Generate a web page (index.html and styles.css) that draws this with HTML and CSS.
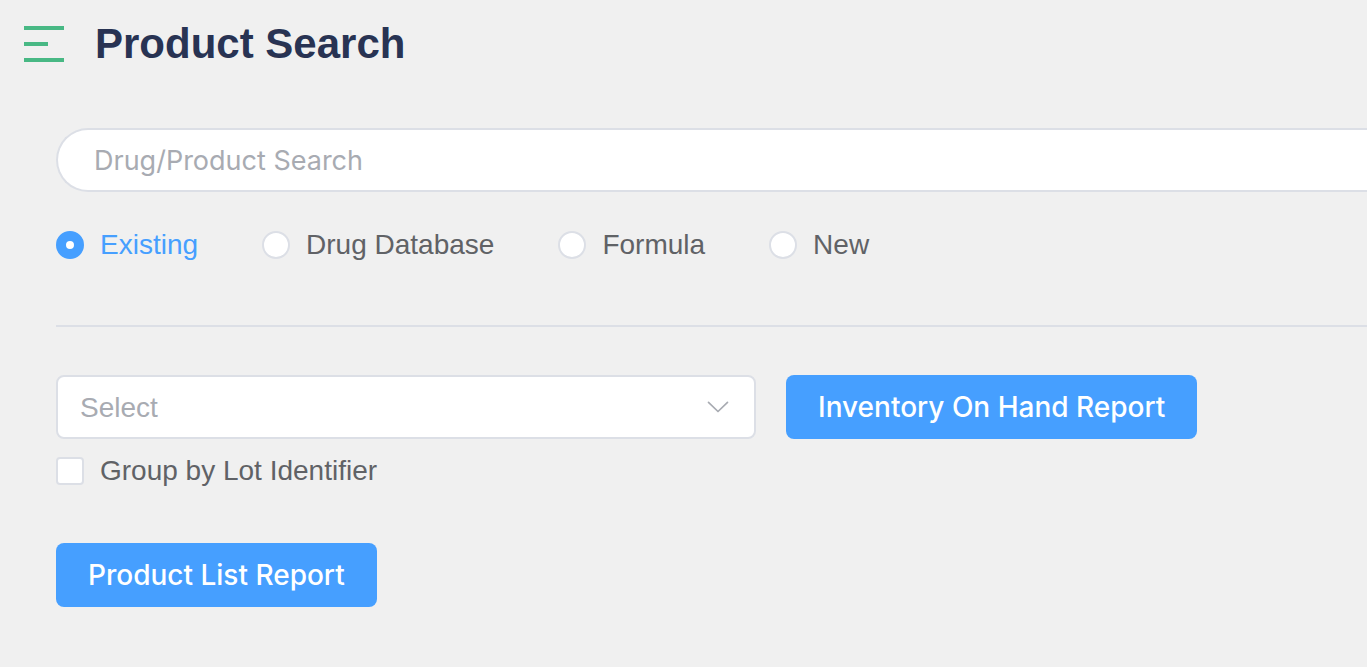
FILE: index.html
```html
<!DOCTYPE html>
<html lang="en">
<head>
<meta charset="utf-8">
<title>Product Search</title>
<link rel="stylesheet" href="styles.css">
</head>
<body>
<header class="topbar">
  <button class="menu" type="button" aria-label="Toggle menu">
    <svg width="40" height="36" viewBox="0 0 40 36" fill="#48b884" aria-hidden="true"><path d="M0 0h40v4H0zM0 16h24v4H0zM0 32h40v4H0z"/></svg>
  </button>
  <h1 class="title">Product Search</h1>
</header>
<main class="content">
  <input class="search" type="text" placeholder="Drug/Product Search" aria-label="Drug/Product Search">
  <div class="radios" role="radiogroup" aria-label="Search source">
    <label class="option"><input class="radio" type="radio" name="source" checked><span class="option-text">Existing</span></label>
    <label class="option"><input class="radio" type="radio" name="source"><span class="option-text">Drug Database</span></label>
    <label class="option"><input class="radio" type="radio" name="source"><span class="option-text">Formula</span></label>
    <label class="option"><input class="radio" type="radio" name="source"><span class="option-text">New</span></label>
  </div>
  <hr class="divider">
  <div class="report-row">
    <select class="select" aria-label="Report location"><option>Select</option></select>
    <button class="button" type="button">Inventory On Hand Report</button>
  </div>
  <label class="option group"><input class="checkbox" type="checkbox"><span class="option-text">Group by Lot Identifier</span></label>
  <button class="button" type="button">Product List Report</button>
</main>
</body>
</html>
```
FILE: styles.css
```css
* { box-sizing: border-box; }
body {
  margin: 0;
  background: #f0f0f0;
  color: #606266;
  font-family: "Liberation Sans", Arial, sans-serif;
  font-size: 28px;
  overflow-x: hidden;
}
.topbar {
  display: flex;
  align-items: center;
  gap: 31px;
  height: 88px;
  padding: 0 24px;
}
.menu {
  display: flex;
  padding: 0;
  border: 0;
  background: none;
}
.title {
  margin: 0;
  color: #283353;
  font-size: 42px;
  line-height: 48px;
}
.content { padding: 40px 0 60px 56px; }
.search {
  display: block;
  width: 100%;
  height: 64px;
  padding: 0 36px;
  border: 2px solid #dcdfe6;
  border-right: 0;
  border-radius: 32px 0 0 32px;
  background: #fff;
  color: #606266;
  font-family: Inter, "Liberation Sans", sans-serif;
  font-size: 27px;
}
.search::placeholder { color: #a8abb2; opacity: 1; }
.radios {
  display: flex;
  gap: 64px;
  margin-top: 37px;
}
.option {
  display: flex;
  align-items: center;
  gap: 16px;
  line-height: 32px;
}
.radio, .checkbox {
  flex: none;
  appearance: none;
  width: 28px;
  height: 28px;
  margin: 0;
  border: 2px solid #dcdfe6;
  background: #fff;
}
.radio { border-radius: 50%; }
.checkbox { border-radius: 4px; }
.radio:checked { border: 10px solid #469fff; }
.radio:checked + .option-text { color: #469fff; }
.divider {
  height: 2px;
  margin: 64px 0 48px;
  border: 0;
  background: #dcdfe6;
}
.report-row {
  display: flex;
  gap: 30px;
}
.select {
  appearance: none;
  width: 700px;
  height: 64px;
  padding: 0 22px;
  border: 2px solid #dcdfe6;
  border-radius: 8px;
  background: #fff url("data:image/svg+xml,%3Csvg xmlns='http://www.w3.org/2000/svg' width='22' height='12' fill='none' stroke='%23a8abb2' stroke-width='1.7' stroke-linecap='round' stroke-linejoin='round'%3E%3Cpath d='M1.5 1.3l9.5 9.2 9.5-9.2'/%3E%3C/svg%3E") no-repeat right 25px center;
  color: #a8abb2;
  font: inherit;
}
.button {
  height: 64px;
  padding: 0 32px;
  border: 0;
  border-radius: 8px;
  background: #469fff;
  color: #fff;
  font-family: Inter, "Liberation Sans", sans-serif;
  font-size: 28px;
  font-weight: 500;
}
.group {
  width: fit-content;
  margin: 16px 0 56px;
}
```
